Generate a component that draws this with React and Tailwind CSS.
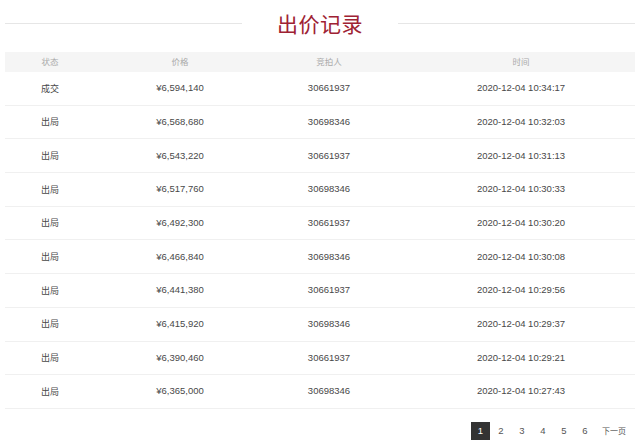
const rows = [
  ['成交', '¥6,594,140', '30661937', '2020-12-04 10:34:17'],
  ['出局', '¥6,568,680', '30698346', '2020-12-04 10:32:03'],
  ['出局', '¥6,543,220', '30661937', '2020-12-04 10:31:13'],
  ['出局', '¥6,517,760', '30698346', '2020-12-04 10:30:33'],
  ['出局', '¥6,492,300', '30661937', '2020-12-04 10:30:20'],
  ['出局', '¥6,466,840', '30698346', '2020-12-04 10:30:08'],
  ['出局', '¥6,441,380', '30661937', '2020-12-04 10:29:56'],
  ['出局', '¥6,415,920', '30698346', '2020-12-04 10:29:37'],
  ['出局', '¥6,390,460', '30661937', '2020-12-04 10:29:21'],
  ['出局', '¥6,365,000', '30698346', '2020-12-04 10:27:43'],
]

const cols = 'grid grid-cols-[90px_170px_128px_1fr] items-center'

export default function App() {
  return (
    <div className="w-[640px] h-[446px] bg-white px-[5px] font-['Liberation_Sans','Noto_Sans_CJK_SC',sans-serif] text-[#484848]">
      {/* Title */}
      <div className="flex items-center h-[46px] pt-[1px]">
        <div className="flex-1 h-px bg-[#e6e6e6]"></div>
        <h1 className="px-[35px] text-[21px] leading-none text-[#9e2233] font-['Noto_Sans_CJK_SC',sans-serif] tracking-[0.5px]">
          出价记录
        </h1>
        <div className="flex-1 h-px bg-[#e6e6e6]"></div>
      </div>

      {/* Table */}
      <div className="mt-[6px]">
        <div className={`${cols} h-[20px] bg-[#f5f5f5] text-[8.5px] text-[#aaa] text-center`}>
          <div>状态</div>
          <div>价格</div>
          <div>竞拍人</div>
          <div className="pl-[14px]">时间</div>
        </div>
        {rows.map((r, i) => (
          <div key={i} className={`${cols} h-[33.7px] border-b border-[#f0f0f0] text-[9.5px] text-center`}>
            <div className="font-['Noto_Sans_CJK_SC',sans-serif] text-[9px]">{r[0]}</div>
            <div>{r[1]}</div>
            <div>{r[2]}</div>
            <div className="pl-[14px]">{r[3]}</div>
          </div>
        ))}
      </div>

      {/* Pagination */}
      <div className="flex justify-end items-center mt-[13px] pr-[9px] text-[9.5px] text-[#555]">
        <div className="w-[19px] h-[18px] bg-[#333] text-white flex items-center justify-center">1</div>
        {['2', '3', '4', '5', '6'].map((n) => (
          <div key={n} className="w-[20px] h-[18px] flex items-center justify-center ml-[1px] text-[#555]">{n}</div>
        ))}
        <div className="ml-[7px] h-[18px] flex items-center font-['Noto_Sans_CJK_SC',sans-serif] text-[8px] text-[#555]">下一页</div>
      </div>
    </div>
  )
}
